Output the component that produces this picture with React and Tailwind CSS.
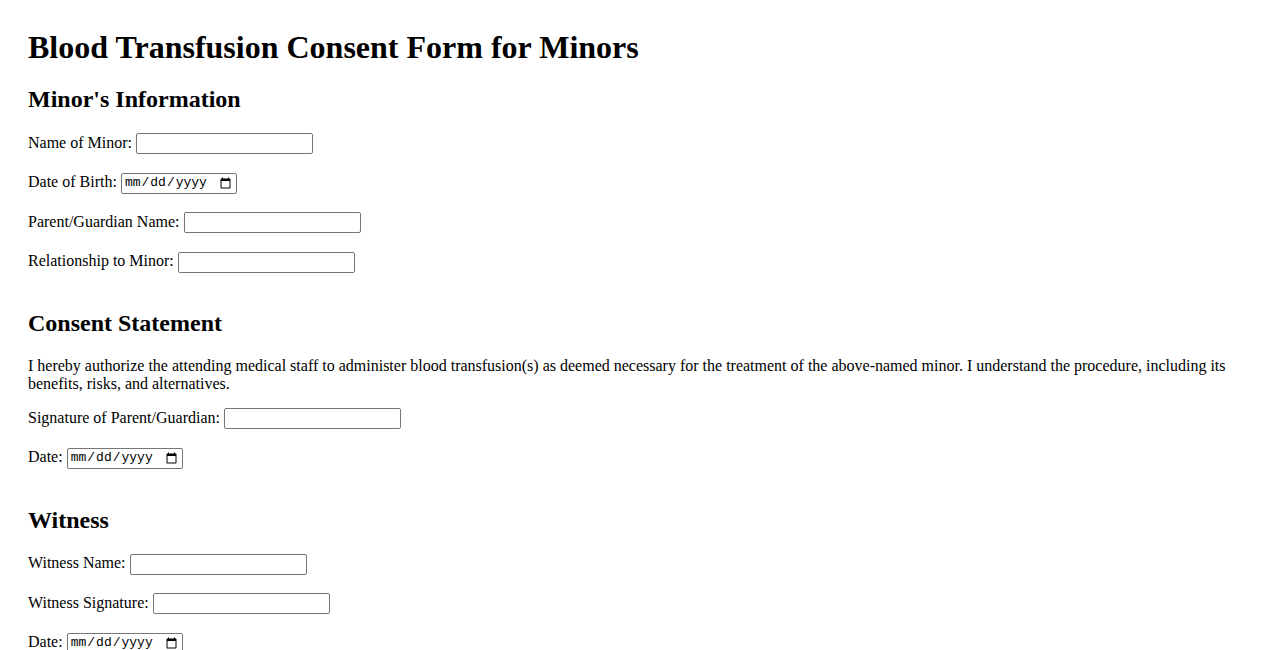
import React from 'react';

const Field = ({ label, type = 'text', first }) => (
  <div className={`flex items-center gap-[4px] h-[21px] ${first ? 'mt-[20px]' : 'mt-[18.5px]'}`}>
    <label className="leading-[18px] pb-[2px] whitespace-nowrap">{label}</label>
    {type === 'date' ? (
      <input
        type="date"
        className="w-[116px] h-[21px] border border-[#767676] rounded-[2px] bg-white px-[2px] text-[13px] text-black font-['Liberation_Mono',monospace]"
      />
    ) : (
      <input
        type="text"
        className="w-[177px] h-[21px] border border-[#767676] rounded-[2px] bg-white px-[2px] text-[13px]"
      />
    )}
  </div>
);

const App = () => {
  return (
    <div className="min-h-screen bg-white text-black font-['Liberation_Serif','Times_New_Roman',serif] text-[16px] px-[28px] pt-[29px] pb-[40px]">
      <h1 className="text-[32px] font-bold leading-[37px]">Blood Transfusion Consent Form for Minors</h1>

      {/* Minor's Information */}
      <section>
        <h2 className="mt-[19px] text-[24px] font-bold leading-[28px]">Minor's Information</h2>
        <Field label="Name of Minor:" first />
        <Field label="Date of Birth:" type="date" />
        <Field label="Parent/Guardian Name:" />
        <Field label="Relationship to Minor:" />
      </section>

      {/* Consent Statement */}
      <section className="mt-[36px]">
        <h2 className="text-[24px] font-bold leading-[28px]">Consent Statement</h2>
        <p className="mt-[20px] leading-[18px]">
          I hereby authorize the attending medical staff to administer blood transfusion(s) as deemed necessary for the treatment of the above-named minor. I understand the procedure, including its benefits, risks, and alternatives.
        </p>
        <div className="-mt-[3px]">
          <Field label="Signature of Parent/Guardian:" />
          <Field label="Date:" type="date" />
        </div>
      </section>

      {/* Witness */}
      <section className="mt-[37px]">
        <h2 className="text-[24px] font-bold leading-[28px]">Witness</h2>
        <Field label="Witness Name:" first />
        <Field label="Witness Signature:" />
        <Field label="Date:" type="date" />
      </section>
    </div>
  );
};

export default App;
